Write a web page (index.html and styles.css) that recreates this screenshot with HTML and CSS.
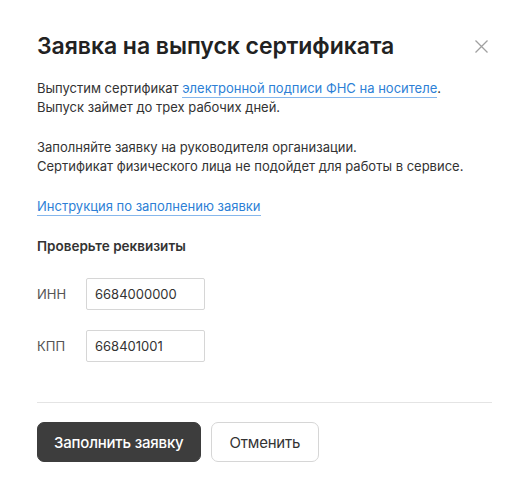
FILE: index.html
```html
<!DOCTYPE html>
<html lang="ru">
<head>
<meta charset="utf-8">
<link rel="stylesheet" href="styles.css">
</head>
<body>
<div class="modal">
  <div class="header">
    <h1 class="title">Заявка на выпуск сертификата</h1>
    <button class="close" aria-label="Закрыть">
      <svg width="13" height="13" viewBox="0 0 13 13"><path d="M0.5 0.5L12.5 12.5M12.5 0.5L0.5 12.5" stroke="#a0a0a0" stroke-width="1.3" fill="none"/></svg>
    </button>
  </div>
  <p class="text">Выпустим сертификат <a class="link" href="#">электронной подписи ФНС на носителе</a>.<br>Выпуск займет до трех рабочих дней.</p>
  <p class="text">Заполняйте заявку на руководителя организации.<br>Сертификат физического лица не подойдет для работы в сервисе.</p>
  <p class="text"><a class="link" href="#">Инструкция по заполнению заявки</a></p>
  <h2 class="subtitle">Проверьте реквизиты</h2>
  <div class="fields">
    <label class="field"><span class="label">ИНН</span><input class="input" value="6684000000"></label>
    <label class="field"><span class="label">КПП</span><input class="input" value="668401001"></label>
  </div>
  <div class="footer">
    <button class="btn btn-primary">Заполнить заявку</button>
    <button class="btn btn-secondary">Отменить</button>
  </div>
</div>
</body>
</html>
```
FILE: styles.css
```css
html, body { margin: 0; padding: 0; background: #fff; }
body { font-family: Inter, "Noto Sans", sans-serif; color: #333; }
.modal { width: 455px; padding: 28px 38px 0 37px; position: relative; }
.header { display: flex; justify-content: space-between; align-items: center; height: 36px; }
.title { margin: 0; font-size: 23px; font-weight: 600; color: #222; letter-spacing: -0.05px; }
.close { background: none; border: 0; padding: 0; margin-right: 4px; width: 13px; height: 13px; display: flex; cursor: pointer; }
.text { margin: 0; font-size: 13px; line-height: 19px; color: #333; }
.header + .text { margin-top: 15px; }
.text + .text { margin-top: 21px; }
.link { color: #2d7fd6; text-decoration: none; border-bottom: 1px solid #86b7ec; padding-bottom: 1px; }
.subtitle { margin: 21px 0 0; font-size: 13.5px; font-weight: 600; color: #333; line-height: 19px; }
.fields { display: flex; flex-direction: column; gap: 20px; margin-top: 22px; }
.field { display: flex; align-items: center; gap: 0; }
.label { width: 49px; font-size: 13px; color: #555; }
.input { box-sizing: border-box; width: 119px; height: 32px; border: 1px solid #d6d6d6; border-radius: 2px; padding: 0 8px; font: 13px Inter, "Noto Sans", sans-serif; color: #333; outline: none; }
.footer { border-top: 1px solid #e4e4e4; margin-top: 40px; padding-top: 19px; display: flex; gap: 10px; }
.btn { height: 40px; border-radius: 7px; font: 15px Inter, "Noto Sans", sans-serif; padding: 0 16px; white-space: nowrap; letter-spacing: -0.2px; cursor: pointer; }
.btn-primary { background: #3d3d3d; color: #fff; border: 1px solid #3d3d3d; font-weight: 500; }
.btn-secondary { background: #fff; color: #333; border: 1px solid #d6d6d6; padding: 0 18px; }
```
